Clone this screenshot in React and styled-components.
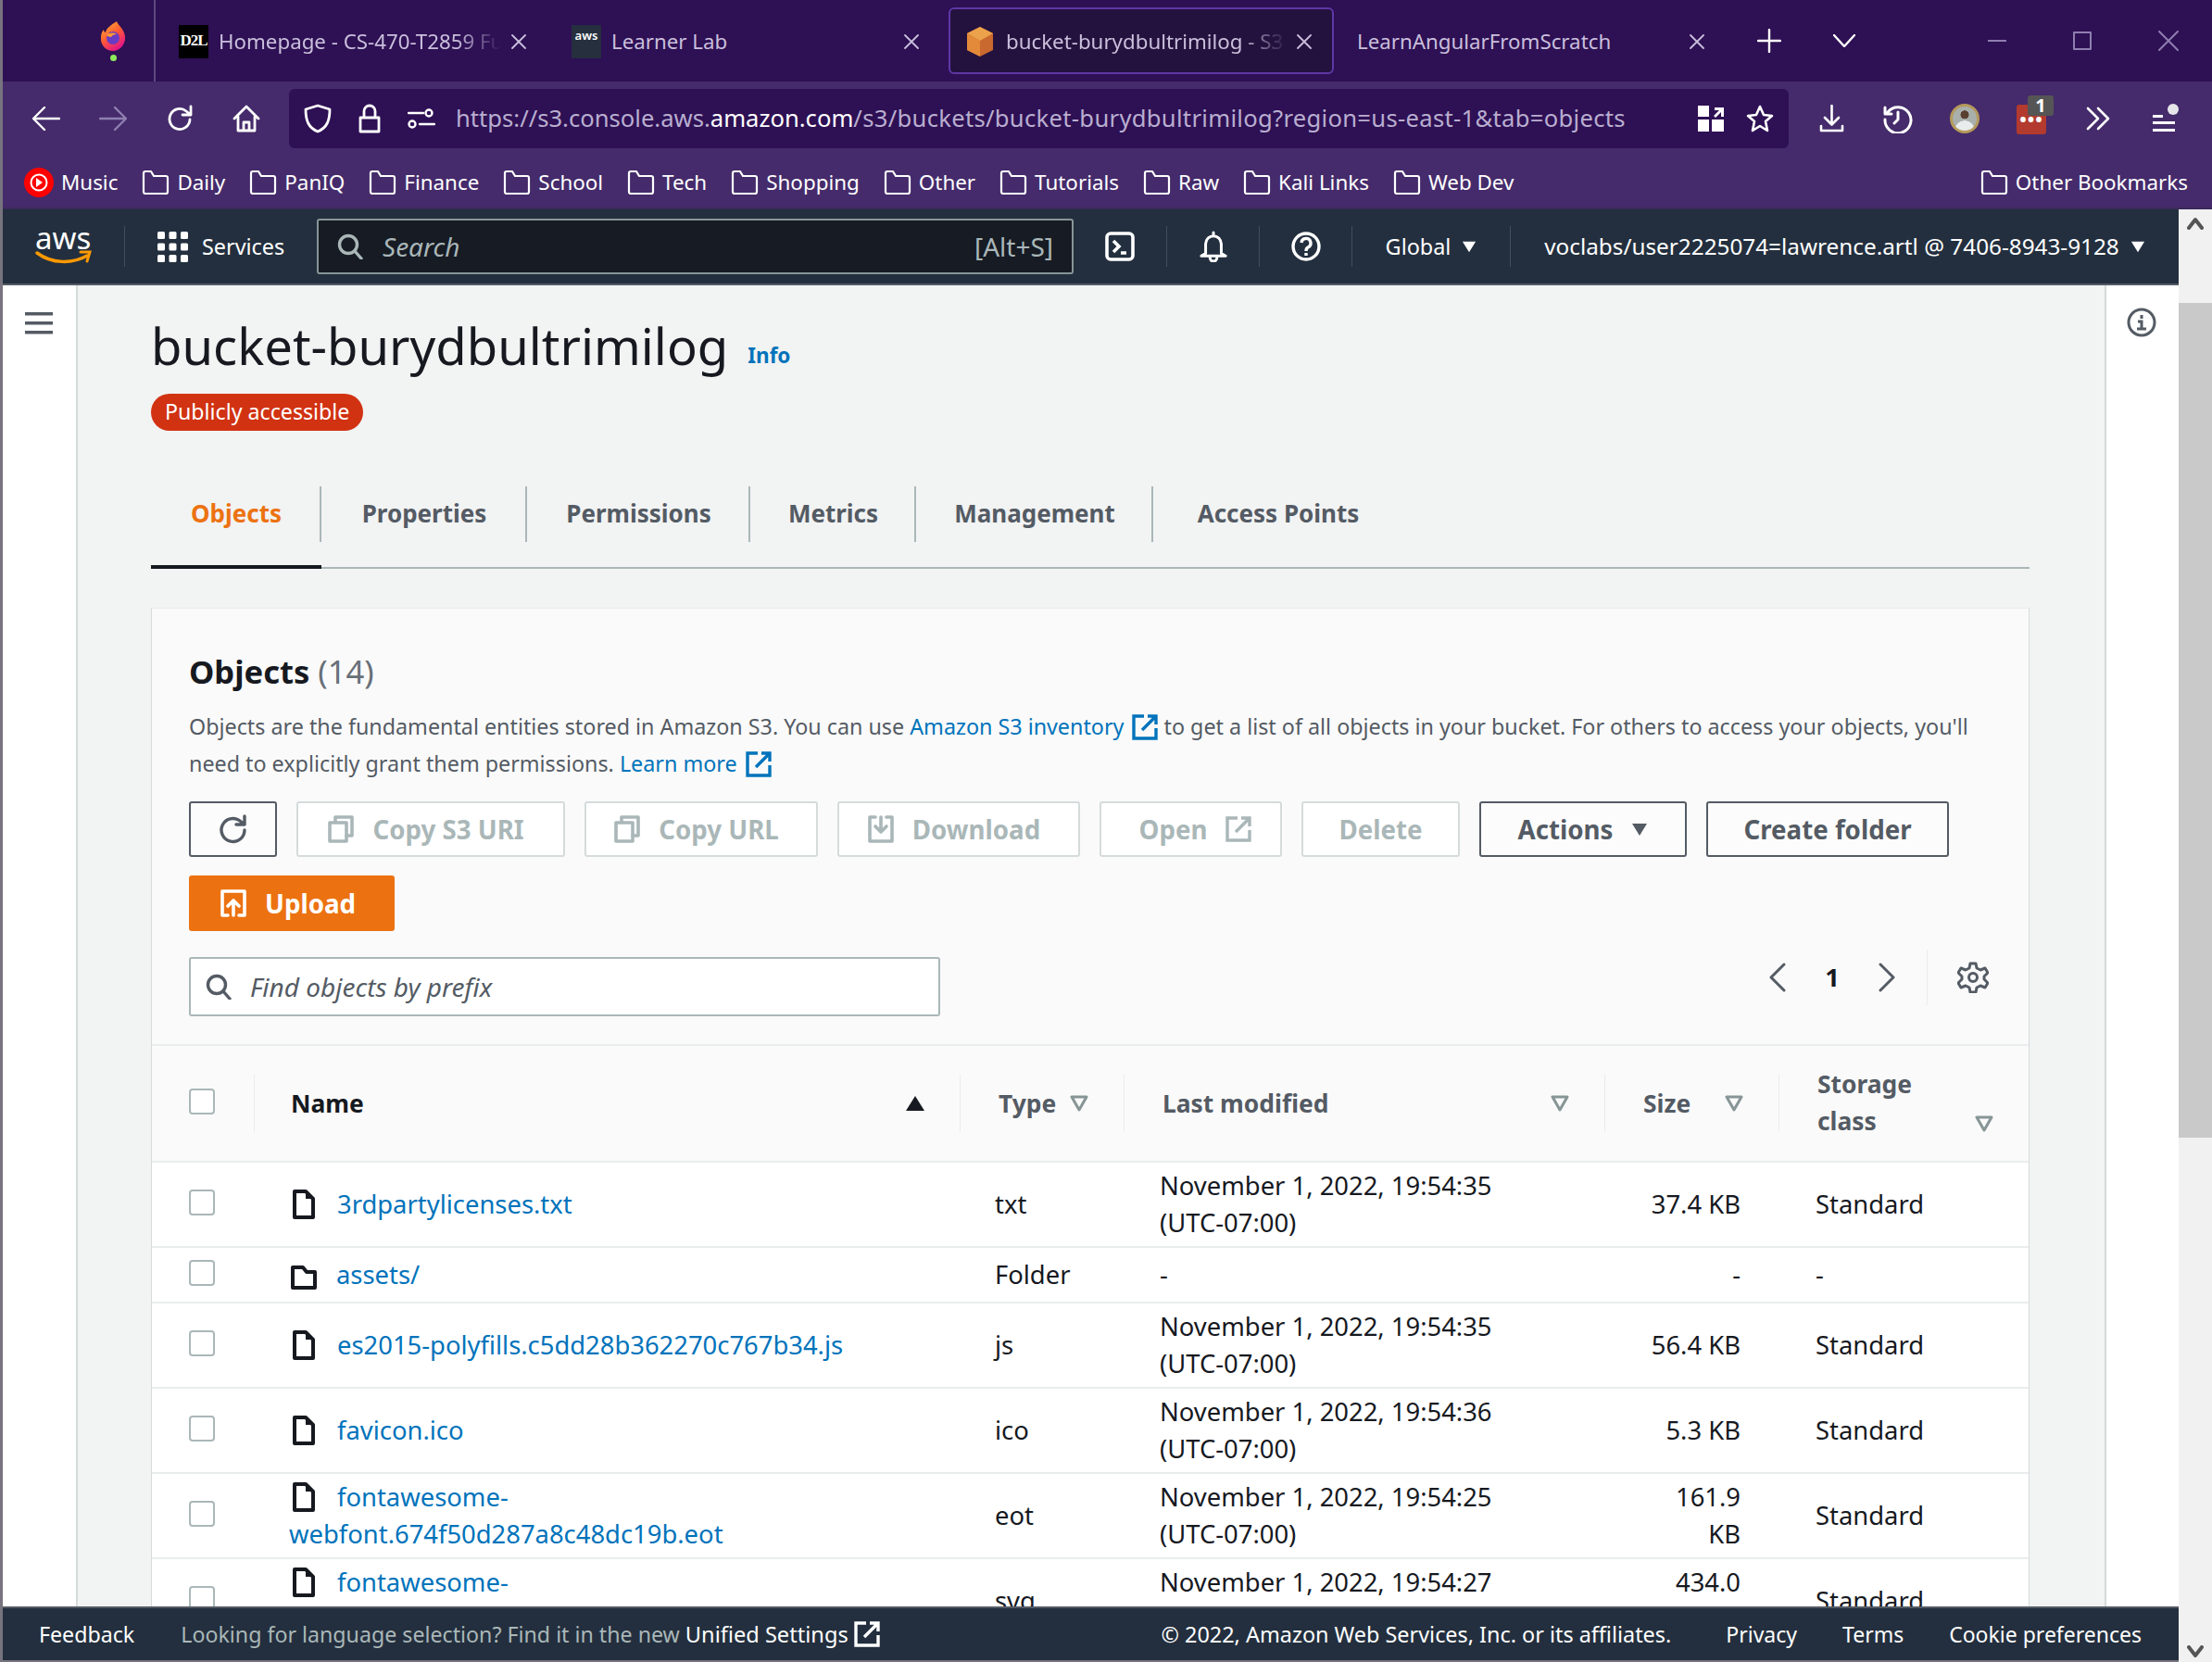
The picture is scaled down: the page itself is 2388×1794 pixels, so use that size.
import React from 'react';
import styled, { createGlobalStyle } from 'styled-components';

const GlobalStyle = createGlobalStyle`
  html, body {
    margin: 0;
    padding: 0;
    background: #232f3e;
  }
  * {
    box-sizing: border-box;
  }
`;

const Screen = styled.div`
  width: 2388px;
  height: 1794px;
  overflow: hidden;
  display: flex;
  flex-direction: column;
  border-left: 3px solid #77737f;
  font-family: 'Noto Sans', 'Open Sans', sans-serif;
  font-size: 27.4px;
  line-height: 40px;
  color: #16191f;
`;

const Glyph = styled.svg`
  flex: none;
  display: block;
  fill: none;
  stroke: currentColor;
  stroke-width: ${({ $sw }) => $sw || 2.4};
  stroke-linecap: round;
  stroke-linejoin: round;
`;

/* browser chrome */
const TabStrip = styled.div`
  height: 88px;
  flex: none;
  display: flex;
  align-items: center;
  background: #2e1054;
  color: #fff;
`;

const FoxSlot = styled.div`
  width: 165px;
  height: 88px;
  flex: none;
  display: flex;
  flex-direction: column;
  align-items: center;
  justify-content: center;
  gap: 4px;
  padding-left: 75px;
  border-right: 2px solid #5d4a80;
`;

const GreenDot = styled.span`
  width: 7px;
  height: 7px;
  border-radius: 50%;
  background: #8ee85c;
`;

const Tabs = styled.div`
  display: flex;
  gap: 8px;
  margin-left: 8px;
`;

const Tab = styled.div`
  width: 416px;
  height: 72px;
  display: flex;
  align-items: center;
  gap: 11px;
  padding: 2px 22px 0 15px;
  border-radius: 6px;
  border: ${({ $active }) => ($active ? '2px solid #5e37a6' : '2px solid transparent')};
  background: ${({ $active }) => ($active ? '#24123e' : 'transparent')};
  color: #c9bfdc;
  font-size: 22.3px;
`;

const TabTitle = styled.span`
  flex: 1;
  min-width: 0;
  white-space: nowrap;
  overflow: hidden;
  mask-image: ${({ $fade }) => ($fade ? 'linear-gradient(to right, #000 84%, transparent 100%)' : 'none')};
`;

const FavD2L = styled.span`
  width: 32px;
  height: 36px;
  flex: none;
  background: #000;
  color: #fff;
  font-family: 'Liberation Serif', serif;
  font-weight: 700;
  font-size: 17px;
  line-height: 34px;
  text-align: center;
  letter-spacing: -1px;
`;

const FavAws = styled.span`
  width: 32px;
  height: 36px;
  flex: none;
  display: flex;
  flex-direction: column;
  align-items: center;
  background: #252f3e;
  color: #fff;
  font-size: 13px;
  line-height: 17px;
  padding-top: 3px;
  font-weight: 600;
`;

const StripButtons = styled.div`
  display: flex;
  align-items: center;
  margin-left: 33px;
  gap: 56px;
`;

const WindowButtons = styled.div`
  margin-left: auto;
  display: flex;
  align-items: center;
  gap: 72px;
  padding-right: 36px;
  color: #8f7fb0;
`;

const Toolbar = styled.div`
  height: 88px;
  flex: none;
  display: flex;
  align-items: center;
  padding-bottom: 8px;
  background: #452b6b;
  color: #fff;
`;

const NavIcons = styled.div`
  width: 309px;
  flex: none;
  padding-left: 32px;
  display: flex;
  align-items: center;
  gap: 42px;
`;

const UrlBar = styled.div`
  width: 1619px;
  height: 64px;
  flex: none;
  display: flex;
  align-items: center;
  border-radius: 6px;
  background: #2e1054;
  padding-left: 16px;
  padding-right: 16px;
`;

const UrlIcons = styled.div`
  display: flex;
  align-items: center;
  gap: 28px;
  margin-right: 22px;
`;

const UrlText = styled.span`
  flex: 1;
  white-space: nowrap;
  color: #b9aed0;
  font-size: 25.6px;
  b {
    font-weight: 400;
    color: #fff;
  }
  i {
    font-style: normal;
    letter-spacing: 0.3px;
  }
`;

const UrlEnd = styled.div`
  display: flex;
  align-items: center;
  gap: 24px;
`;

const ToolIcons = styled.div`
  display: flex;
  align-items: center;
  padding-left: 10px;
`;

const ToolSlot = styled.div`
  width: 72px;
  flex: none;
  display: flex;
  align-items: center;
  justify-content: center;
`;

const Badge = styled.span`
  position: relative;
  width: 32px;
  height: 32px;
  margin-top: 2px;
  display: flex;
  align-items: center;
  justify-content: center;
  background: #b33a2e;
  border-radius: 3px;
  color: #fff;
  font-size: 20px;
  font-weight: 700;
  line-height: 20px;
  letter-spacing: 1px;
`;

const BadgeCount = styled.span`
  position: absolute;
  top: -10px;
  right: -8px;
  width: 28px;
  height: 22px;
  background: #555;
  border-radius: 3px;
  font-size: 20px;
  font-weight: 700;
  line-height: 22px;
  letter-spacing: 0;
  text-align: center;
`;

const Avatar = styled.span`
  width: 32px;
  height: 32px;
  border-radius: 50%;
  border: 3px solid #b59a5c;
  background: radial-gradient(circle at 50% 34%, #5a4030 0 20%, transparent 22%),
    radial-gradient(circle at 50% 100%, #e8ecec 0 36%, transparent 38%),
    #a9b0ac;
`;

const BookmarkBar = styled.div`
  height: 50px;
  flex: none;
  display: flex;
  align-items: center;
  padding: 0 26px 6px 23px;
  background: #452b6b;
  border-bottom: 2px solid #3a2a5a;
  color: #fff;
  font-size: 22.4px;
`;

const Bookmark = styled.div`
  display: flex;
  align-items: center;
  gap: 8px;
  margin-right: 26px;
  white-space: nowrap;
  margin-left: ${({ $end }) => ($end ? 'auto' : '0')};
  &:last-child {
    margin-right: 0;
  }
`;

/* console */
const Workspace = styled.div`
  flex: 1;
  min-height: 0;
  display: flex;
`;

const Console = styled.div`
  flex: 1;
  min-width: 0;
  display: flex;
  flex-direction: column;
`;

const Scrollbar = styled.div`
  width: 36px;
  flex: none;
  display: flex;
  flex-direction: column;
  align-items: center;
  justify-content: space-between;
  position: relative;
  background: #f1f1f1;
  color: #555;
  padding: 8px 0 4px;
`;

const ScrollThumb = styled.div`
  position: absolute;
  left: 0;
  right: 0;
  top: 101px;
  height: 901px;
  background: #c9c9c9;
`;

const AwsNav = styled.div`
  height: 82px;
  flex: none;
  display: flex;
  align-items: center;
  background: #232f3e;
  border-bottom: 2px solid #545b64;
  color: #fff;
  font-size: 23.4px;
`;

const AwsLogo = styled.div`
  width: 132px;
  height: 44px;
  flex: none;
  padding-left: 35px;
  border-right: 1px solid #414d5c;
  display: flex;
  flex-direction: column;
  line-height: 26px;
  font-size: 33px;
`;

const Services = styled.div`
  width: 207px;
  flex: none;
  display: flex;
  align-items: center;
  gap: 15px;
  padding-left: 35px;
`;

const ConsoleSearch = styled.div`
  width: 817px;
  height: 60px;
  flex: none;
  display: flex;
  align-items: center;
  gap: 21px;
  padding: 0 20px;
  background: #161b24;
  border: 2px solid #879596;
  border-radius: 3px;
  color: #aab7b8;
  font-size: 28px;
`;

const SearchHint = styled.span`
  font-style: italic;
  flex: 1;
`;

const NavCell = styled.div`
  width: ${({ $w }) => $w}px;
  height: 44px;
  flex: none;
  display: flex;
  align-items: center;
  justify-content: center;
  gap: 12px;
  border-left: ${({ $plain }) => ($plain ? 'none' : '1px solid #414d5c')};
  white-space: nowrap;
  font-size: ${({ $fs }) => $fs || 23.4}px;
`;

const MainArea = styled.div`
  flex: 1;
  min-height: 0;
  display: flex;
  overflow: hidden;
`;

const LeftRail = styled.div`
  width: 81px;
  flex: none;
  background: #fff;
  border-right: 2px solid #d5dbdb;
  padding: 23px 0 0 24px;
  color: #545b64;
`;

const RightRail = styled.div`
  width: 80px;
  flex: none;
  background: #fff;
  border-left: 2px solid #d5dbdb;
  padding: 24px 0 0 22px;
  color: #545b64;
`;

const Content = styled.div`
  flex: 1;
  min-width: 0;
  background: #f2f3f3;
  padding: 35px 81px 0 79px;
`;

const TitleRow = styled.div`
  height: 60px;
  display: flex;
  align-items: center;
  gap: 21px;
`;

const PageTitle = styled.h1`
  margin: 0;
  font-size: 54.4px;
  font-weight: 400;
  line-height: 60px;
`;

const InfoLink = styled.a`
  margin-top: 22px;
  color: #0073bb;
  font-weight: 700;
  font-size: 22.5px;
`;

const PublicTag = styled.span`
  margin-top: 22px;
  display: inline-block;
  height: 40px;
  padding: 0 15px;
  border-radius: 20px;
  background: #d13212;
  color: #fff;
  font-size: 23.2px;
  line-height: 38px;
`;

const TabList = styled.div`
  margin-top: 60px;
  height: 89px;
  display: flex;
  border-bottom: 2px solid #aab7b8;
`;

const PageTab = styled.div`
  height: 89px;
  padding-top: 9px;
  width: ${({ $w }) => $w}px;
  font-size: 26px;
  font-weight: 700;
  display: flex;
  justify-content: center;
  position: relative;
  color: ${({ $active }) => ($active ? '#ec7211' : '#545b64')};
  border-bottom: ${({ $active }) => ($active ? '4px solid #16191f' : 'none')};
  &::after {
    content: '';
    position: absolute;
    right: 0;
    top: 0;
    height: 60px;
    width: 2px;
    background: ${({ $last }) => ($last ? 'transparent' : '#aab7b8')};
  }
`;

const Card = styled.div`
  margin-top: 42px;
  background: #fafafa;
  border: 1px solid #d5dbdb;
  border-top-color: #eaeded;
`;

const CardHead = styled.div`
  padding: 45px 40px 0 40px;
`;

const CardTitle = styled.h2`
  margin: 0;
  font-size: 34.6px;
  line-height: 46px;
  font-weight: 700;
  span {
    font-weight: 400;
    color: #687078;
  }
`;

const Blurb = styled.p`
  margin: 16px 0 0;
  font-size: 23.3px;
  color: #545b64;
  a {
    color: #0073bb;
  }
`;

const ExtIcon = styled.span`
  display: inline-block;
  vertical-align: -6px;
  margin: 0 0 0 3px;
  line-height: 0;
  svg {
    display: block;
  }
`;

const ButtonRow = styled.div`
  margin-top: 21px;
  display: flex;
  flex-wrap: wrap;
  gap: 20px 21px;
`;

const Button = styled.div`
  width: ${({ $w }) => $w}px;
  height: 60px;
  display: flex;
  align-items: center;
  justify-content: center;
  gap: 20px;
  padding: 0 ${({ $nudge }) => ($nudge < 0 ? -$nudge : 0)}px 0 ${({ $nudge }) => ($nudge > 0 ? $nudge : 0)}px;
  border-radius: 3px;
  font-size: 27.7px;
  font-weight: 700;
  border: 2px solid ${({ $off }) => ($off ? '#d5dbdb' : '#545b64')};
  color: ${({ $off }) => ($off ? '#aab7b8' : '#545b64')};
  background: ${({ $off }) => ($off ? '#fff' : '#fcfcfc')};
`;

const UploadButton = styled(Button)`
  border: none;
  background: #ec7211;
  color: #fff;
`;

const FilterRow = styled.div`
  margin-top: 20px;
  display: flex;
  align-items: flex-start;
  justify-content: space-between;
  padding-right: 3px;
`;

const PrefixSearch = styled.div`
  width: 811px;
  height: 64px;
  margin-top: 8px;
  display: flex;
  align-items: center;
  gap: 20px;
  padding: 0 16px;
  background: #fff;
  border: 2px solid #aab7b8;
  border-radius: 3px;
  color: #545b64;
  font-size: 28px;
`;

const Pager = styled.div`
  height: 60px;
  display: flex;
  align-items: center;
  color: #545b64;
`;

const PageNumber = styled.span`
  width: 98px;
  text-align: center;
  font-weight: 700;
  color: #16191f;
`;

const PagerGear = styled.div`
  height: 60px;
  margin-left: 33px;
  padding-left: 32px;
  border-left: 1px solid #eaeded;
  display: flex;
  align-items: center;
`;

const COLUMNS = '110px 762px 177px 519px 188px 1fr';

const HeaderRow = styled.div`
  margin-top: 30px;
  height: 128px;
  display: grid;
  grid-template-columns: ${COLUMNS};
  align-items: center;
  border-top: 2px solid #eaeded;
  border-bottom: 2px solid #eaeded;
`;

const CheckCell = styled.div`
  padding-left: 40px;
`;

const Checkbox = styled.span`
  display: block;
  width: 28px;
  height: 28px;
  margin-top: -4px;
  background: #fff;
  border: 2px solid #aab7b8;
  border-radius: 4px;
`;

const HeadCell = styled.div`
  height: 62px;
  display: flex;
  align-items: center;
  justify-content: space-between;
  padding: 0 38px 0 ${({ $dark }) => ($dark ? 39 : 41)}px;
  border-left: 1px solid #eaeded;
  font-size: 26.4px;
  font-weight: 700;
  color: ${({ $dark }) => ($dark ? '#16191f' : '#545b64')};
`;

const HeadWrap = styled(HeadCell)`
  align-items: flex-end;
  span {
    max-width: 110px;
    margin-bottom: -8px;
  }
`;

const Row = styled.div`
  display: grid;
  grid-template-columns: ${COLUMNS};
  align-items: center;
  min-height: ${({ $thin }) => ($thin ? 60 : 92)}px;
  background: #fff;
  border-bottom: 2px solid #eaeded;
  padding: 4px 0;
`;

const NameCell = styled.div`
  padding: 0 30px 0 38px;
`;

const FileLink = styled.a`
  color: #0073bb;
`;

const FileGlyph = styled.span`
  display: inline-block;
  vertical-align: -6px;
  margin: 0 ${({ $folder }) => ($folder ? 21 : 24)}px 0 ${({ $folder }) => ($folder ? 2 : 4)}px;
  color: #16191f;
`;

const Cell = styled.div`
  padding-left: ${({ $pad }) => $pad || 38}px;
`;

const SizeCell = styled.div`
  padding: 0 41px 0 42px;
  text-align: right;
`;

const Footer = styled.div`
  height: 60px;
  flex: none;
  display: flex;
  align-items: center;
  padding: 0 40px 0 39px;
  background: #232f3e;
  border-top: 2px solid #545b64;
  border-bottom: 2px solid #77737f;
  color: #fff;
  font-size: 23.2px;
  white-space: nowrap;
`;

const FooterHint = styled.span`
  margin-left: 50px;
  color: #aab7b8;
  display: flex;
  align-items: center;
  gap: 6px;
  b {
    font-weight: 400;
    font-size: 23.6px;
    color: #fff;
  }
`;

const FooterLinks = styled.div`
  margin-left: auto;
  display: flex;
  font-size: 23px;
  gap: 49px;
`;

const Copyright = styled.span`
  margin-right: 10px;
  font-size: 23.4px;
`;

function FolderIcon() {
  return (
    <Glyph width="30" height="28" viewBox="0 0 30 28" $sw={2.2}>
      <path d="M2 4a2 2 0 0 1 2-2h6l3 5h13a2 2 0 0 1 2 2v15a2 2 0 0 1-2 2H4a2 2 0 0 1-2-2z" />
    </Glyph>
  );
}

function CloseIcon({ size = 16 }) {
  return (
    <Glyph width={size} height={size} viewBox="0 0 16 16" $sw={1.8}>
      <path d="M1 1l14 14M15 1L1 15" />
    </Glyph>
  );
}

function FoxLogo() {
  return (
    <svg width="32" height="32" viewBox="0 0 32 32">
      <defs>
        <linearGradient id="fox" x1="0" y1="0" x2="0.6" y2="1">
          <stop offset="0" stopColor="#ffbd2e" />
          <stop offset="0.55" stopColor="#ff5a36" />
          <stop offset="1" stopColor="#e31587" />
        </linearGradient>
      </defs>
      <path d="M20 0c1 4 8 8 9 16 1 9-6 16-13 16S2 26 3 17c0-3 1-6 3-8 0 2 1 3 2 3 1-5 6-8 12-12z" fill="url(#fox)" />
      <circle cx="16" cy="18" r="7" fill="#6a3bc4" />
      <path d="M9 15c3-3 8-3 11-1-3 0-5 1-6 3-2 0-4-1-5-2z" fill="#ff9a2e" />
    </svg>
  );
}

function CubeFavicon() {
  return (
    <svg width="34" height="34" viewBox="0 0 34 34">
      <path d="M17 1l14 7v18l-14 7-14-7V8z" fill="#c9682f" />
      <path d="M17 1l14 7-14 8-14-8z" fill="#eba24a" />
      <path d="M3 8l14 8v17l-14-7z" fill="#e38a3a" />
    </svg>
  );
}

function ExternalLink({ color = '#0073bb', size = 28 }) {
  return (
    <svg width={size} height={size} viewBox="0 0 28 28" fill="none" stroke={color} strokeWidth="3.4" style={{ flex: 'none' }}>
      <path d="M13 2H2v24h24V15" />
      <path d="M11 17L25 3M17 2h9v9" />
    </svg>
  );
}

function FileIcon() {
  return (
    <Glyph width="24" height="32" viewBox="0 0 24 32" $sw={4}>
      <path d="M2 2h12l8 8v20H2z" />
      <path d="M14 2v8h8z" fill="currentColor" stroke="none" />
    </Glyph>
  );
}

function OpenFolderIcon() {
  return (
    <Glyph width="28" height="26" viewBox="0 0 28 26" $sw={4}>
      <path d="M2 2h11l4 5h9v17H2z" />
    </Glyph>
  );
}

function CopyIcon() {
  return (
    <Glyph width="28" height="30" viewBox="0 0 28 30" $sw={3.6}>
      <path d="M8 6V2h18v20h-6" />
      <path d="M2 8h18v20H2z" />
    </Glyph>
  );
}

function CaretFilled({ size = 18, color = 'currentColor' }) {
  return (
    <svg width={size} height={size} viewBox="0 0 18 18" style={{ flex: 'none' }}>
      <path d="M1 3h16L9 16z" fill={color} />
    </svg>
  );
}

function CaretUp() {
  return (
    <svg width="20" height="18" viewBox="0 0 20 18" style={{ flex: 'none' }}>
      <path d="M10 1l10 16H0z" fill="#16191f" />
    </svg>
  );
}

function SortHollow() {
  return (
    <Glyph width="20" height="18" viewBox="0 0 20 18" $sw={3} style={{ color: '#879596' }}>
      <path d="M2 2h16l-8 14z" />
    </Glyph>
  );
}

function SearchIcon({ size = 28 }) {
  return (
    <Glyph width={size} height={size} viewBox="0 0 28 28" $sw={3.4}>
      <circle cx="12" cy="12" r="9.5" />
      <path d="M19 19l7 8" />
    </Glyph>
  );
}

const FILES = [
  { name: '3rdpartylicenses.txt', type: 'txt', time: '19:54:35', size: '37.4 KB', storage: 'Standard' },
  { name: 'assets/', type: 'Folder', folder: true, size: '-', storage: '-' },
  { name: 'es2015-polyfills.c5dd28b362270c767b34.js', type: 'js', time: '19:54:35', size: '56.4 KB', storage: 'Standard' },
  { name: 'favicon.ico', type: 'ico', time: '19:54:36', size: '5.3 KB', storage: 'Standard' },
  { name: 'fontawesome-webfont.674f50d287a8c48dc19b.eot', type: 'eot', time: '19:54:25', size: '161.9 KB', storage: 'Standard' },
  { name: 'fontawesome-webfont.912ec66d7572ff821749.svg', type: 'svg', time: '19:54:27', size: '434.0 KB', storage: 'Standard' },
];

const BOOKMARKS = ['Daily', 'PanIQ', 'Finance', 'School', 'Tech', 'Shopping', 'Other', 'Tutorials', 'Raw', 'Kali Links', 'Web Dev'];

const PAGE_TABS = [
  { label: 'Objects', width: 184, active: true },
  { label: 'Properties', width: 222 },
  { label: 'Permissions', width: 241 },
  { label: 'Metrics', width: 179 },
  { label: 'Management', width: 256 },
  { label: 'Access Points', width: 270, last: true },
];

function FileRow({ file }) {
  const parts = file.name.split(/(?<=fontawesome-)/);
  return (
    <Row $thin={file.folder}>
      <CheckCell>
        <Checkbox />
      </CheckCell>
      <NameCell>
        <FileGlyph $folder={file.folder}>{file.folder ? <OpenFolderIcon /> : <FileIcon />}</FileGlyph>
        <FileLink>
          {parts[0]}
          {parts[1] && <br />}
          {parts[1]}
        </FileLink>
      </NameCell>
      <Cell>{file.type}</Cell>
      <Cell $pad={39}>
        {file.time ? (
          <>
            November 1, 2022, {file.time}
            <br />
            (UTC-07:00)
          </>
        ) : (
          '-'
        )}
      </Cell>
      <SizeCell>{file.size}</SizeCell>
      <Cell $pad={40}>{file.storage}</Cell>
    </Row>
  );
}

export default function App() {
  return (
    <Screen>
      <GlobalStyle />
      <TabStrip>
        <FoxSlot>
          <FoxLogo />
          <GreenDot />
        </FoxSlot>
        <Tabs>
          <Tab>
            <FavD2L>D2L</FavD2L>
            <TabTitle $fade>Homepage - CS-470-T2859 Full Stack</TabTitle>
            <CloseIcon />
          </Tab>
          <Tab>
            <FavAws>aws</FavAws>
            <TabTitle>Learner Lab</TabTitle>
            <CloseIcon />
          </Tab>
          <Tab $active>
            <CubeFavicon />
            <TabTitle $fade>bucket-burydbultrimilog - S3 bucket</TabTitle>
            <CloseIcon />
          </Tab>
          <Tab>
            <TabTitle>LearnAngularFromScratch</TabTitle>
            <CloseIcon />
          </Tab>
        </Tabs>
        <StripButtons>
          <Glyph width="26" height="26" viewBox="0 0 26 26" $sw={2.4}>
            <path d="M13 1v24M1 13h24" />
          </Glyph>
          <Glyph width="24" height="14" viewBox="0 0 24 14" $sw={2.4}>
            <path d="M1 1l11 12L23 1" />
          </Glyph>
        </StripButtons>
        <WindowButtons>
          <Glyph width="20" height="4" viewBox="0 0 20 4" $sw={2}>
            <path d="M0 2h20" />
          </Glyph>
          <Glyph width="20" height="20" viewBox="0 0 20 20" $sw={2}>
            <path d="M1 1h18v18H1z" />
          </Glyph>
          <Glyph width="22" height="22" viewBox="0 0 22 22" $sw={2}>
            <path d="M1 1l20 20M21 1L1 21" />
          </Glyph>
        </WindowButtons>
      </TabStrip>

      <Toolbar>
        <NavIcons>
          <Glyph width="30" height="26" viewBox="0 0 30 26">
            <path d="M29 13H2M13 1L1 13l12 12" />
          </Glyph>
          <Glyph width="30" height="26" viewBox="0 0 30 26" style={{ color: '#8f7fb0' }}>
            <path d="M1 13h27M17 1l12 12-12 12" />
          </Glyph>
          <Glyph width="30" height="30" viewBox="0 0 30 30" $sw={2.8}>
            <path d="M26 16a11 11 0 1 1-4-9l5 4M27 2v9h-9" />
          </Glyph>
          <Glyph width="30" height="30" viewBox="0 0 30 30" $sw={2.8}>
            <path d="M2 15L15 2l13 13M6 13v15h18V13M12 28v-9h6v9" />
          </Glyph>
        </NavIcons>
        <UrlBar>
          <UrlIcons>
            <Glyph width="30" height="32" viewBox="0 0 30 32" $sw={2.8}>
              <path d="M15 2l13 4c0 12-3 20-13 24C5 26 2 18 2 6z" />
            </Glyph>
            <Glyph width="26" height="32" viewBox="0 0 26 32" $sw={2.8}>
              <path d="M3 15h20v15H3zM7 15V8a6 6 0 0 1 12 0v7" />
            </Glyph>
            <Glyph width="30" height="24" viewBox="0 0 30 24">
              <path d="M1 6h16M13 18h16" />
              <circle cx="23" cy="6" r="3.5" />
              <circle cx="5" cy="18" r="3.5" />
            </Glyph>
          </UrlIcons>
          <UrlText>
            https://s3.console.aws.<b>amazon.com</b>
            <i>/s3/buckets/bucket-burydbultrimilog?region=us-east-1&amp;tab=objects</i>
          </UrlText>
          <UrlEnd>
            <svg width="28" height="28" viewBox="0 0 28 28" fill="#fff">
              <path d="M0 0h12v12H0zM0 15h12v13H0zM15 15h13v13H15zM17 11l6-6h-5V2h10v10h-3V7l-6 6z" />
            </svg>
            <Glyph width="30" height="30" viewBox="0 0 30 30" $sw={2.6}>
              <path d="M15 2l4 9 9 1-7 6 2 10-8-5-8 5 2-10-7-6 9-1z" />
            </Glyph>
          </UrlEnd>
        </UrlBar>
        <ToolIcons>
          <ToolSlot>
            <Glyph width="27" height="30" viewBox="0 0 27 30" $sw={2.6}>
              <path d="M13.5 1v20M6 14l7.5 7.5L21 14M2 23v5h23v-5" />
            </Glyph>
          </ToolSlot>
          <ToolSlot>
            <Glyph width="32" height="32" viewBox="0 0 32 32" $sw={3}>
              <path d="M5 9a14 14 0 1 1-3 8M2 4v7h7M16 9v8l-4 4" />
            </Glyph>
          </ToolSlot>
          <ToolSlot>
            <Avatar />
          </ToolSlot>
          <ToolSlot>
            <Badge>
              •••
              <BadgeCount>1</BadgeCount>
            </Badge>
          </ToolSlot>
          <ToolSlot>
            <Glyph width="26" height="26" viewBox="0 0 26 26" $sw={2.6}>
              <path d="M2 2l11 11L2 24M13 2l11 11-11 11" />
            </Glyph>
          </ToolSlot>
          <ToolSlot>
            <svg width="30" height="32" viewBox="0 0 30 32" fill="#fff">
              <path d="M2 12h11v3H2zM2 19h24v3H2zM2 27h24v3H2z" />
              <circle cx="24" cy="6" r="6" fill="#e6e6ea" />
            </svg>
          </ToolSlot>
        </ToolIcons>
      </Toolbar>

      <BookmarkBar>
        <Bookmark>
          <svg width="32" height="32" viewBox="0 0 32 32">
            <circle cx="16" cy="16" r="16" fill="#f00" />
            <circle cx="16" cy="16" r="8.5" fill="none" stroke="#fff" strokeWidth="2" />
            <path d="M13 11l7 5-7 5z" fill="#fff" />
          </svg>
          Music
        </Bookmark>
        {BOOKMARKS.map((label) => (
          <Bookmark key={label}>
            <FolderIcon />
            {label}
          </Bookmark>
        ))}
        <Bookmark $end>
          <FolderIcon />
          Other Bookmarks
        </Bookmark>
      </BookmarkBar>

      <Workspace>
        <Console>
          <AwsNav>
            <AwsLogo>
              aws
              <svg width="62" height="16" viewBox="0 0 62 16" fill="none">
                <path d="M2 3c16 12 38 12 54 3" stroke="#f90" strokeWidth="3.5" strokeLinecap="round" />
                <path d="M49 2h10l-3 10" stroke="#f90" strokeWidth="3" strokeLinecap="round" />
              </svg>
            </AwsLogo>
            <Services>
              <svg width="33" height="33" viewBox="0 0 33 33" fill="#fff">
                {[0, 12.5, 25].map((y) => [0, 12.5, 25].map((x) => <rect key={`${x}-${y}`} x={x} y={y} width="8" height="8" rx="1.5" />))}
              </svg>
              Services
            </Services>
            <ConsoleSearch>
              <SearchIcon />
              <SearchHint>Search</SearchHint>
              <span>[Alt+S]</span>
            </ConsoleSearch>
            <NavCell $w={100} $plain>
              <svg width="32" height="32" viewBox="0 0 32 32" fill="none" stroke="#fff" strokeWidth="3.6">
                <rect x="2" y="2" width="28" height="28" rx="4" />
                <path d="M9 10l6 6-6 6M17 23h6" />
              </svg>
            </NavCell>
            <NavCell $w={100}>
              <Glyph width="30" height="34" viewBox="0 0 32 36" $sw={3.2}>
                <path d="M16 2v3M7 26V15a9 9 0 0 1 18 0v11l5 3H2zM12 31a4 4 0 0 0 8 0" />
              </Glyph>
            </NavCell>
            <NavCell $w={100}>
              <svg width="32" height="32" viewBox="0 0 32 32" fill="none" stroke="#fff" strokeWidth="3.4">
                <circle cx="16" cy="16" r="14" />
                <path d="M11 12a5 5 0 1 1 7 5c-2 1-2 2-2 4M16 23v3" />
              </svg>
            </NavCell>
            <NavCell $w={171}>
              Global
              <CaretFilled size={16} />
            </NavCell>
            <NavCell $w={722} $fs={24.3}>
              voclabs/user2225074=lawrence.artl @ 7406-8943-9128
              <CaretFilled size={16} />
            </NavCell>
          </AwsNav>

          <MainArea>
            <LeftRail>
              <svg width="30" height="24" viewBox="0 0 30 24" fill="currentColor">
                <path d="M0 0h30v3.5H0zM0 10h30v3.5H0zM0 20h30v3.5H0z" />
              </svg>
            </LeftRail>
            <Content>
              <TitleRow>
                <PageTitle>bucket-burydbultrimilog</PageTitle>
                <InfoLink>Info</InfoLink>
              </TitleRow>
              <PublicTag>Publicly accessible</PublicTag>
              <TabList>
                {PAGE_TABS.map((tab) => (
                  <PageTab key={tab.label} $w={tab.width} $active={tab.active} $last={tab.last}>
                    {tab.label}
                  </PageTab>
                ))}
              </TabList>

              <Card>
                <CardHead>
                  <CardTitle>
                    Objects <span>(14)</span>
                  </CardTitle>
                  <Blurb>
                    Objects are the fundamental entities stored in Amazon S3. You can use <a>Amazon S3 inventory</a>{' '}
                    <ExtIcon>
                      <ExternalLink />
                    </ExtIcon>{' '}
                    to get a list of all objects in your bucket. For others to access your objects, you'll need to explicitly
                    grant them permissions. <a>Learn more</a>{' '}
                    <ExtIcon>
                      <ExternalLink />
                    </ExtIcon>
                  </Blurb>
                  <ButtonRow>
                    <Button $w={95}>
                      <Glyph width="32" height="34" viewBox="0 0 32 34" $sw={3.4}>
                        <path d="M28 18a12.5 12.5 0 1 1-5-10l5 4M28 3v9h-9" />
                      </Glyph>
                    </Button>
                    <Button $w={290} $off $nudge={-10}>
                      <CopyIcon />
                      Copy S3 URI
                    </Button>
                    <Button $w={252} $off $nudge={-10}>
                      <CopyIcon />
                      Copy URL
                    </Button>
                    <Button $w={262} $off $nudge={-10}>
                      <Glyph width="28" height="30" viewBox="0 0 28 30" $sw={3.6}>
                        <path d="M8 2H2v26h24V2h-6M14 2v16M8 12l6 6 6-6" />
                      </Glyph>
                      Download
                    </Button>
                    <Button $w={197} $off $nudge={10}>
                      Open
                      <ExternalLink color="#aab7b8" />
                    </Button>
                    <Button $w={171} $off>
                      Delete
                    </Button>
                    <Button $w={224}>
                      Actions
                      <CaretFilled />
                    </Button>
                    <Button $w={262}>Create folder</Button>
                    <UploadButton $w={222} $nudge={-8}>
                      <Glyph width="28" height="30" viewBox="0 0 28 30" $sw={3.6}>
                        <path d="M8 28H2V2h24v26h-6M14 28V12M8 18l6-6 6 6" />
                      </Glyph>
                      Upload
                    </UploadButton>
                  </ButtonRow>
                  <FilterRow>
                    <PrefixSearch>
                      <SearchIcon />
                      <em>Find objects by prefix</em>
                    </PrefixSearch>
                    <Pager>
                      <Glyph width="20" height="32" viewBox="0 0 20 32" $sw={3}>
                        <path d="M17 2L3 16l14 14" />
                      </Glyph>
                      <PageNumber>1</PageNumber>
                      <Glyph width="20" height="32" viewBox="0 0 20 32" $sw={3}>
                        <path d="M3 2l14 14L3 30" />
                      </Glyph>
                      <PagerGear>
                        <Glyph width="34" height="34" viewBox="0 0 34 34" $sw={3}>
                          <circle cx="17" cy="17" r="4.5" />
                          <path d="M14 2h6l1 5 4 2 5-2 3 5-4 4v3l4 4-3 5-5-2-4 2-1 5h-6l-1-5-4-2-5 2-3-5 4-4v-3L1 12l3-5 5 2 4-2z" />
                        </Glyph>
                      </PagerGear>
                    </Pager>
                  </FilterRow>
                </CardHead>

                <HeaderRow>
                  <CheckCell>
                    <Checkbox />
                  </CheckCell>
                  <HeadCell $dark>
                    Name
                    <CaretUp />
                  </HeadCell>
                  <HeadCell>
                    Type
                    <SortHollow />
                  </HeadCell>
                  <HeadCell>
                    Last modified
                    <SortHollow />
                  </HeadCell>
                  <HeadCell>
                    Size
                    <SortHollow />
                  </HeadCell>
                  <HeadWrap>
                    <span>Storage class</span>
                    <SortHollow />
                  </HeadWrap>
                </HeaderRow>
                {FILES.map((file) => (
                  <FileRow file={file} key={file.name} />
                ))}
              </Card>
            </Content>
            <RightRail>
              <svg width="32" height="32" viewBox="0 0 32 32" fill="none" stroke="currentColor" strokeWidth="3">
                <circle cx="16" cy="16" r="14" />
                <path d="M16 8v4M12 15h4v8M11 23h10" />
              </svg>
            </RightRail>
          </MainArea>

          <Footer>
            Feedback
            <FooterHint>
              Looking for language selection? Find it in the new <b>Unified Settings</b>
              <ExternalLink color="#fff" />
            </FooterHint>
            <FooterLinks>
              <Copyright>© 2022, Amazon Web Services, Inc. or its affiliates.</Copyright>
              <span>Privacy</span>
              <span>Terms</span>
              <span>Cookie preferences</span>
            </FooterLinks>
          </Footer>
        </Console>
        <Scrollbar>
          <ScrollThumb />
          <Glyph width="18" height="14" viewBox="0 0 18 14" $sw={4}>
            <path d="M2 12l7-9 7 9" />
          </Glyph>
          <Glyph width="18" height="14" viewBox="0 0 18 14" $sw={4}>
            <path d="M2 2l7 9 7-9" />
          </Glyph>
        </Scrollbar>
      </Workspace>
    </Screen>
  );
}
